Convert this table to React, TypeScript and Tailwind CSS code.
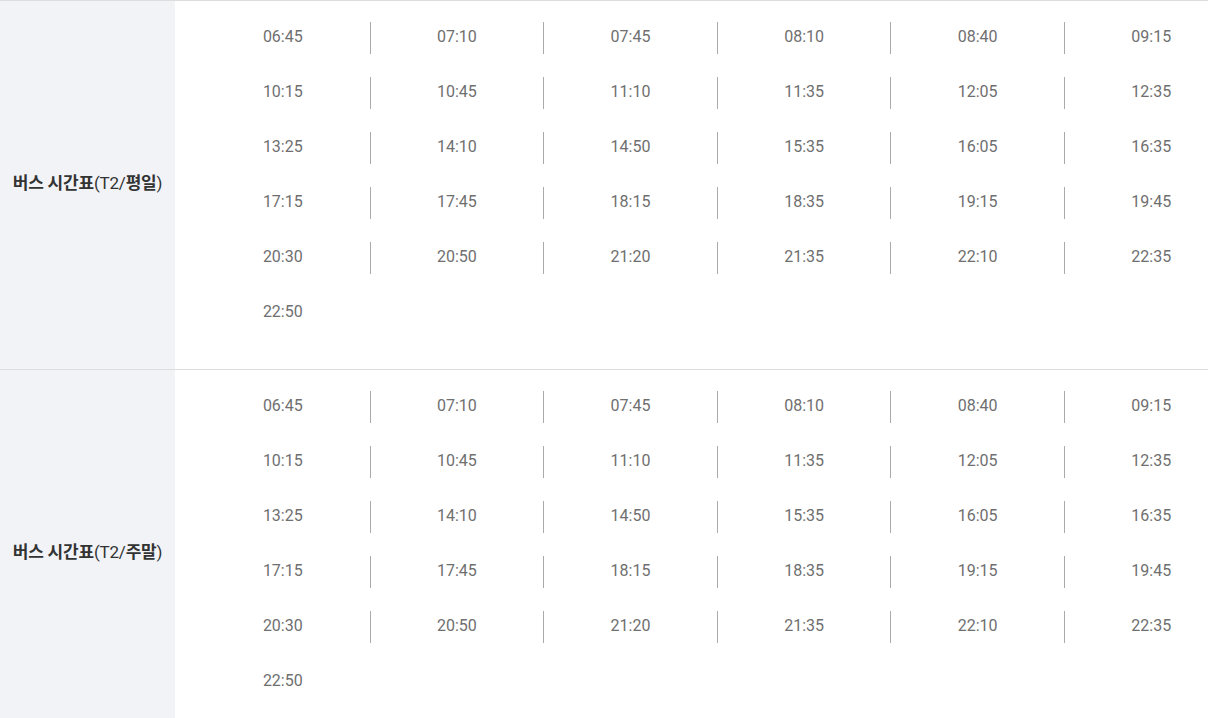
import React from "react";

const times = [
  "06:45", "07:10", "07:45", "08:10", "08:40", "09:15",
  "10:15", "10:45", "11:10", "11:35", "12:05", "12:35",
  "13:25", "14:10", "14:50", "15:35", "16:05", "16:35",
  "17:15", "17:45", "18:15", "18:35", "19:15", "19:45",
  "20:30", "20:50", "21:20", "21:35", "22:10", "22:35",
  "22:50",
];

function Section({ day }: { day: string }) {
  const rows: string[][] = [];
  for (let i = 0; i < times.length; i += 6) rows.push(times.slice(i, i + 6));
  return (
    <div className="flex border-t border-[#dddddd]">
      <div className="w-[175px] shrink-0 bg-[#f2f3f7] flex items-center justify-center">
        <span className="text-[17px] font-bold text-[#333333] tracking-[-0.2px] -mt-[2px]" style={{ fontFamily: 'Roboto, "Noto Sans CJK KR", sans-serif' }}>
          버스 시간표<span className="font-normal">(T2/</span>{day}<span className="font-normal">)</span>
        </span>
      </div>
      <div className="pl-[21px] pt-[21px] pb-[40px] flex flex-col gap-[23px]">
        {rows.map((row, ri) => (
          <div key={ri} className="flex">
            {row.map((t, ci) => (
              <div
                key={ci}
                className={`w-[173.6px] shrink-0 h-[32px] flex items-center justify-center text-[16px] font-normal text-[#6f6f6f] ${ci > 0 ? "border-l border-[#aaaaaa]" : ""}`}
                style={{ fontFamily: 'Roboto, sans-serif' }}
              >
                <span className="-mt-[3px]">{t}</span>
              </div>
            ))}
          </div>
        ))}
      </div>
    </div>
  );
}

export default function App() {
  return (
    <div className="w-[1208px] h-[718px] overflow-hidden bg-white">
      <div className="w-[1260px]">
        <Section day="평일" />
        <Section day="주말" />
      </div>
    </div>
  );
}
